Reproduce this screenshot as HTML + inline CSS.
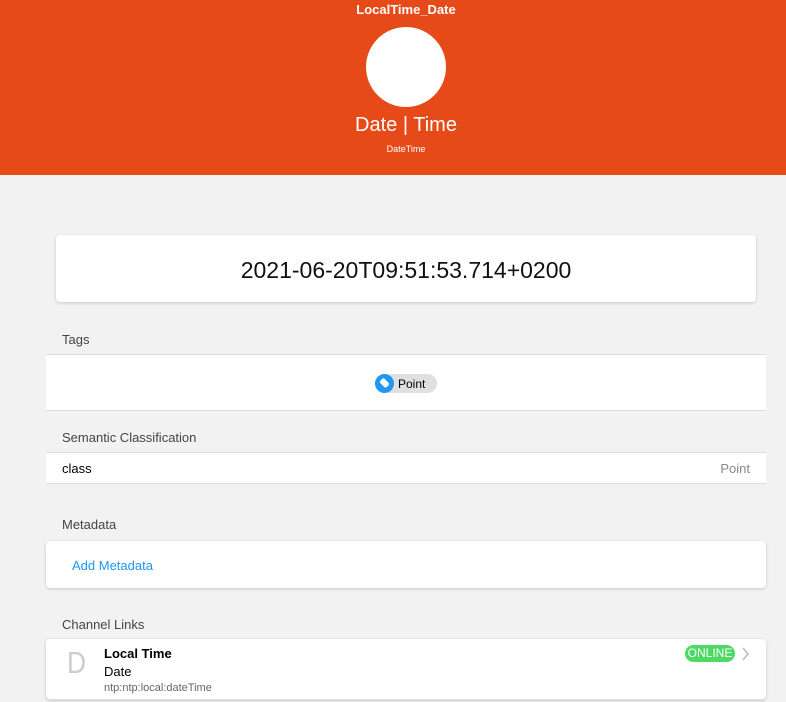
<!DOCTYPE html>
<html><head><meta charset="utf-8"><style>
*{margin:0;padding:0;box-sizing:border-box}
body{width:786px;height:702px;overflow:hidden;background:#f2f2f2;font-family:"Liberation Sans",sans-serif;position:relative;color:#000}
.abs{position:absolute}
.hdr{left:0;top:0;width:786px;height:175px;background:#e64a19}
.c{text-align:center;width:812px;left:0;color:#fff}
.lbl{left:62px;font-size:13px;color:#444}
.blk{left:46px;width:720px;background:#fff;border-top:1px solid #ddd;border-bottom:1px solid #ddd}
.card{background:#fff;border-radius:4px;box-shadow:0 1px 3px rgba(0,0,0,.18)}
</style></head><body>
<div class="abs hdr"></div>
<div class="abs c" style="top:2px;font-size:13px;font-weight:bold">LocalTime_Date</div>
<div class="abs" style="left:366px;top:27px;width:80px;height:80px;border-radius:50%;background:#fff"></div>
<div class="abs c" style="top:114px;font-size:20px">Date | Time</div>
<div class="abs c" style="top:144px;font-size:9px">DateTime</div>

<div class="abs card" style="left:56px;top:235px;width:700px;height:67px"></div>
<div class="abs" style="left:56px;top:257px;width:700px;text-align:center;font-size:23px;color:#111">2021-06-20T09:51:53.714+0200</div>

<div class="abs lbl" style="top:332px">Tags</div>
<div class="abs blk" style="top:354px;height:57px"></div>
<div class="abs" style="left:375px;top:374px;width:62px;height:19px;border-radius:10px;background:#e0e0e0"></div>
<div class="abs" style="left:375px;top:374px;width:19px;height:19px;border-radius:50%;background:#2196f3"></div>
<div class="abs" style="left:380px;top:380px;width:9px;height:6px;background:#fff;border-radius:2px;transform:rotate(45deg)"></div>
<div class="abs" style="left:398px;top:377px;font-size:12px">Point</div>

<div class="abs lbl" style="top:430px">Semantic Classification</div>
<div class="abs blk" style="top:452px;height:32px"></div>
<div class="abs" style="left:62px;top:461px;font-size:13px">class</div>
<div class="abs" style="left:700px;width:50px;text-align:right;top:461px;font-size:13px;color:#888">Point</div>

<div class="abs lbl" style="top:517px">Metadata</div>
<div class="abs card" style="left:46px;top:541px;width:720px;height:47px"></div>
<div class="abs" style="left:72px;top:558px;font-size:13px;color:#2196f3">Add Metadata</div>

<div class="abs lbl" style="top:617px">Channel Links</div>
<div class="abs card" style="left:46px;top:639px;width:720px;height:61px;border-bottom:1px solid #ddd"></div>
<div class="abs" style="left:67px;top:645px;font-size:31px;color:#ccc;font-weight:100;transform:scaleX(.85);transform-origin:left">D</div>
<div class="abs" style="left:104px;top:646px;font-size:13px;font-weight:bold">Local Time</div>
<div class="abs" style="left:104px;top:664px;font-size:13px">Date</div>
<div class="abs" style="left:104px;top:682px;font-size:11px;color:#666">ntp:ntp:local:dateTime</div>
<div class="abs" style="left:685px;top:645px;width:50px;height:17px;border-radius:9px;background:#4cd964;color:#fff;font-size:12px;text-align:center;line-height:17px">ONLINE</div>
<svg class="abs" style="left:741px;top:647px" width="10" height="14"><path d="M2 1 L7 7 L2 13" stroke="#bbb" stroke-width="1.5" fill="none"/></svg>
</body></html>
